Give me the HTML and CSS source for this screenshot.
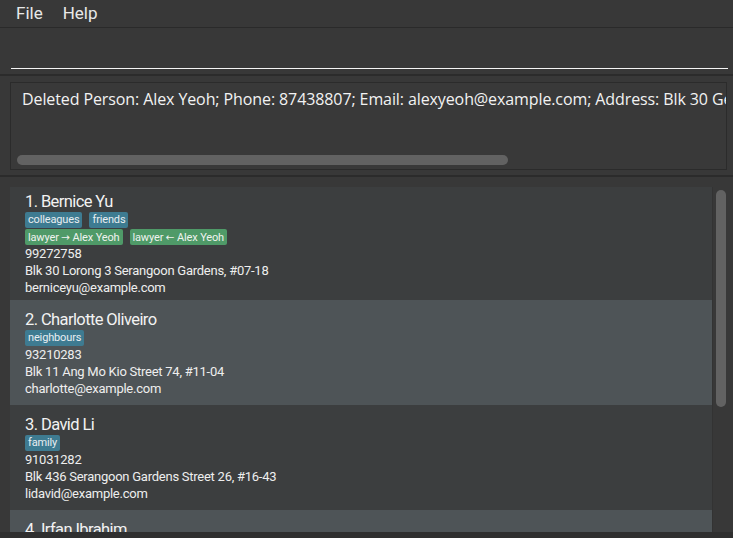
FILE: index.html
```html
<!DOCTYPE html>
<html>
<head>
<meta charset="utf-8">
<link rel="stylesheet" href="styles.css">
</head>
<body>
<div class="app">
  <div class="menubar">
    <span class="menu-item">File</span>
    <span class="menu-item">Help</span>
  </div>
  <div class="command">
    <div class="command-input"></div>
  </div>
  <div class="result">
    <div class="result-box">
      <div class="result-text">Deleted Person: Alex Yeoh; Phone: 87438807; Email: alexyeoh@example.com; Address: Blk 30 Geylang Street 29, #06-40; Tags: [friends]</div>
      <div class="hscroll"><div class="hthumb"></div></div>
    </div>
  </div>
  <div class="list">
    <div class="cards">
      <div class="card odd">
        <div class="name">1. Bernice Yu</div>
        <div class="tags"><span class="tag">colleagues</span><span class="tag">friends</span></div>
        <div class="tags"><span class="tag rel">lawyer <span class="arrow">→</span> Alex Yeoh</span><span class="tag rel">lawyer <span class="arrow">←</span> Alex Yeoh</span></div>
        <div class="line">99272758</div>
        <div class="line">Blk 30 Lorong 3 Serangoon Gardens, #07-18</div>
        <div class="line">berniceyu@example.com</div>
      </div>
      <div class="card even">
        <div class="name">2. Charlotte Oliveiro</div>
        <div class="tags"><span class="tag">neighbours</span></div>
        <div class="line">93210283</div>
        <div class="line">Blk 11 Ang Mo Kio Street 74, #11-04</div>
        <div class="line">charlotte@example.com</div>
      </div>
      <div class="card odd">
        <div class="name">3. David Li</div>
        <div class="tags"><span class="tag">family</span></div>
        <div class="line">91031282</div>
        <div class="line">Blk 436 Serangoon Gardens Street 26, #16-43</div>
        <div class="line">lidavid@example.com</div>
      </div>
      <div class="card even">
        <div class="name">4. Irfan Ibrahim</div>
        <div class="tags"><span class="tag">classmates</span></div>
        <div class="line">92492021</div>
        <div class="line">Blk 47 Tampines Street 20, #17-35</div>
        <div class="line">irfan@example.com</div>
      </div>
    </div>
    <div class="vscroll"><div class="vthumb"></div></div>
  </div>
</div>
</body>
</html>
```

FILE: styles.css
```css
* { box-sizing: border-box; }
html, body {
  margin: 0;
  padding: 0;
  background: #383838;
  width: 733px;
  height: 538px;
  overflow: hidden;
  font-family: Roboto, "Liberation Sans", sans-serif;
  color: #f0f0f0;
}
.app {
  display: flex;
  flex-direction: column;
  height: 538px;
  background: #2f2f2f;
}
.menubar {
  height: 28px;
  background: #383838;
  border-bottom: 1px solid #2a2a2a;
  display: flex;
  align-items: center;
  padding: 0 0 2px 16px;
  gap: 20px;
  font-size: 17px;
  color: #e8e8e8;
}
.command {
  height: 48px;
  background: #383838;
  border-bottom: 2px solid #2b2b2b;
  padding: 0 5px 0 11px;
  display: flex;
  flex-direction: column;
  justify-content: flex-end;
}
.command-input {
  height: 1px;
  background: #f4f4f4;
  margin-bottom: 5px;
}
.result {
  background: #383838;
  padding: 6px 6px 6px 10px;
  border-bottom: 2px solid #2b2b2b;
  height: 101px;
}
.result-box {
  height: 88px;
  border: 1px solid #2b2b2b;
  background: #393939;
  position: relative;
  overflow: hidden;
}
.result-text {
  white-space: nowrap;
  font-family: "Open Sans", Roboto, sans-serif;
  font-size: 16px;
  padding: 5px 0 0 11px;
  color: #f2f2f2;
  letter-spacing: -0.1px;
}
.hscroll {
  position: absolute;
  left: 6px;
  right: 6px;
  bottom: 4px;
  height: 10px;
}
.hthumb {
  width: 491px;
  height: 10px;
  border-radius: 5px;
  background: #626262;
}
.list {
  background: #383838;
  display: flex;
  padding: 10px 0 0 10px;
  height: 355px;
  flex: none;
}
.cards {
  width: 703px;
  overflow: hidden;
  border-right: 1px solid #333;
}
.card {
  min-height: 105px;
  padding: 4px 15px;
  display: flex;
  flex-direction: column;
  justify-content: center;
}
.card.odd { background: #3c3e3f; }
.card.even { background: #4e5457; }
.name {
  font-size: 16.5px;
  line-height: 20px;
  letter-spacing: -0.6px;
  color: #f2f2f2;
  padding-top: 1px;
  margin-bottom: -1px;
}
.tags {
  display: flex;
  gap: 7px;
  margin-top: 1px;
}
.tag {
  font-size: 11px;
  line-height: 16px;
  height: 16px;
  padding: 0 3px;
  border-radius: 2px;
  background: #3e7b91;
  color: #e8eef2;
  letter-spacing: -0.15px;
}
.tag.rel { background: #4f9a68; color: #eef2ee; }
.arrow {
  font-family: "DejaVu Sans", sans-serif;
  font-size: 10.5px;
}
.line {
  font-size: 13px;
  line-height: 17px;
  letter-spacing: -0.25px;
  color: #eeeeee;
}
.vscroll {
  width: 20px;
  padding: 3px 0 0 3px;
}
.vthumb {
  width: 10px;
  height: 217px;
  border-radius: 5px;
  background: #626262;
}
```
